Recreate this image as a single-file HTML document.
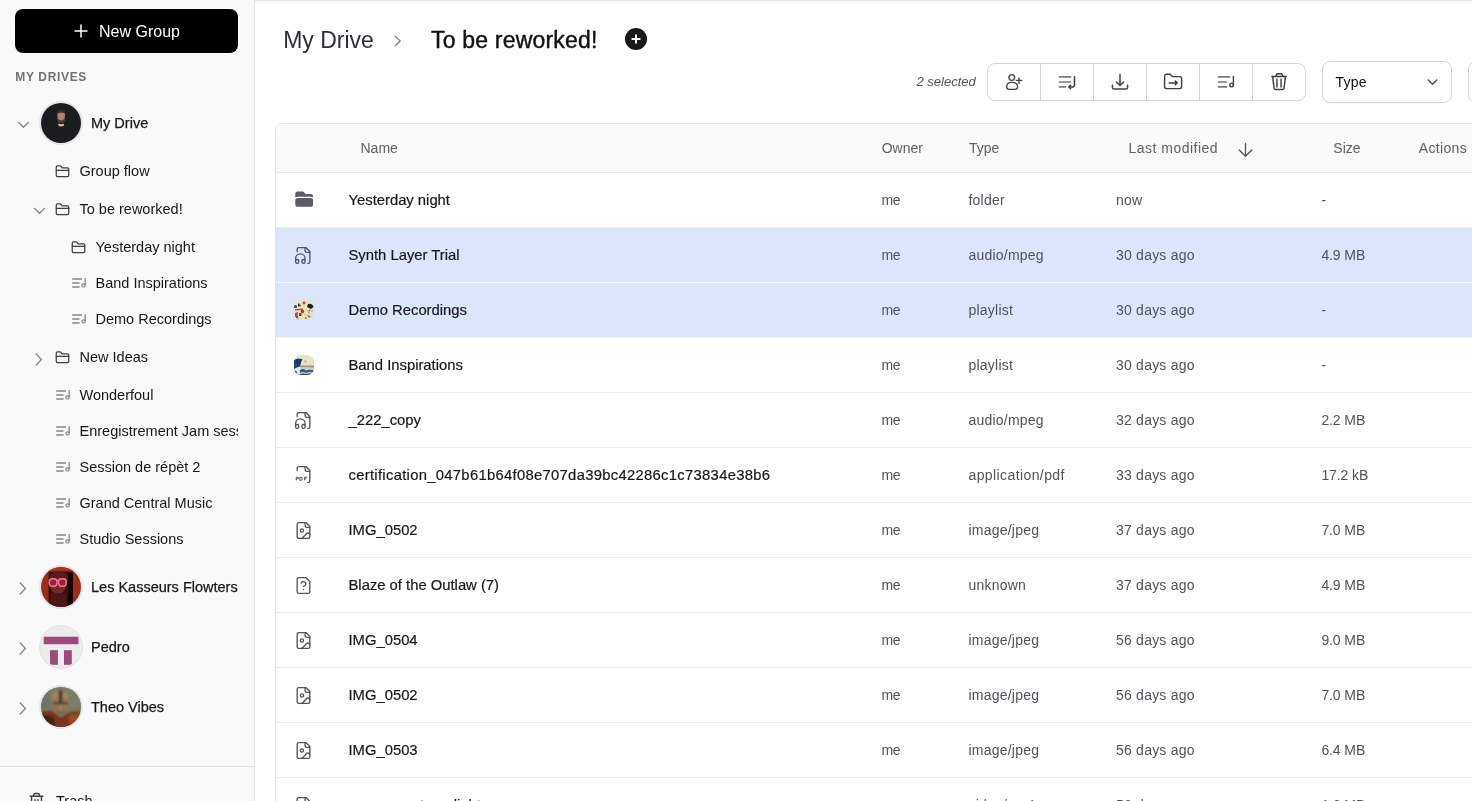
<!DOCTYPE html>
<html><head><meta charset="utf-8">
<style>
*{box-sizing:border-box;margin:0;padding:0}
html,body{width:1472px;height:801px;overflow:hidden;background:#fff;font-family:"Liberation Sans",sans-serif;color:#18181b}
.abs{position:absolute}
#side{position:absolute;left:0;top:0;width:255px;height:801px;background:#f9f9f9;border-right:1px solid #e4e4e7;overflow:hidden}
#newgroup{position:absolute;left:15px;top:9px;width:223px;height:44px;background:#000;border-radius:8px;color:#fff;font-size:16px;box-shadow:0 0 0 1px #fff}
#newgroup .lbl{position:absolute;left:84px;top:1px;line-height:44px}
.sec{position:absolute;left:15.3px;top:70px;font-size:12px;font-weight:700;letter-spacing:0.65px;color:#71717a;line-height:15px}
.item{position:absolute;height:20px;line-height:20px;font-size:14.5px;color:#18181b;white-space:nowrap}
.chev{position:absolute}
.av{position:absolute;left:41px;width:40px;height:40px;border-radius:50%;box-shadow:0 0 0 2px #e5e5e9;overflow:hidden}
.drv{position:absolute;left:91px;height:20px;line-height:20px;font-size:14.5px;color:#18181b;-webkit-text-stroke:0.25px #18181b;white-space:nowrap}
#topline{position:absolute;left:255px;top:0;width:1217px;height:1px;background:#e4e4e7}

.crumb{position:absolute;font-size:23px;line-height:30px;white-space:nowrap}
#tbl{position:absolute;left:275px;top:123px;width:1250px;height:720px;border:1px solid #e1e1e5;border-radius:7px 0 0 0;overflow:hidden}
.hdr{position:absolute;left:0;top:0;width:100%;height:49px;background:#fafafa;border-bottom:1px solid #e4e4e7}
.h{position:absolute;top:14.3px;font-size:14px;line-height:20px;color:#60606a;white-space:nowrap}
.row{position:absolute;left:0;width:100%;height:55px;border-bottom:1px solid #ececee}
.row.sel{background:#dbe6fc;border-bottom-color:#f0f4fe}
.c{position:absolute;top:17.3px;font-size:14px;line-height:20px;color:#52525b;white-space:nowrap;letter-spacing:0.22px}
.nm{position:absolute;top:17.2px;left:72.5px;font-size:14.8px;line-height:20px;color:#18181b;-webkit-text-stroke:0.2px #18181b;white-space:nowrap}
.ic{position:absolute;left:18px;top:17px}
.tb{position:absolute;left:987px;top:63px;width:319px;height:38px;border:1px solid #d4d4d8;border-radius:8px;overflow:hidden}
.tb .cell{position:absolute;top:0;height:36px;width:53px;border-right:1px solid #d4d4d8}
</style></head>
<body>
<div id="wrap" style="position:absolute;left:0;top:0;width:1472px;height:801px;overflow:hidden;will-change:transform">
<div id="side">
  <div id="newgroup">
    <svg class="abs" style="left:59px;top:15px" width="14" height="14" viewBox="0 0 14 14"><path d="M7 0.5V13.5M0.5 7H13.5" stroke="#fff" stroke-width="1.5" fill="none"/></svg>
    <span class="lbl">New Group</span>
  </div>
  <div class="sec">MY DRIVES</div>
<svg class="abs" style="left:55px;top:163.5px" width="15" height="15" viewBox="0 0 24 24" fill="none" stroke="#3f3f46" stroke-width="2" stroke-linecap="round" stroke-linejoin="round"><path d="M20 20a2 2 0 0 0 2-2V8a2 2 0 0 0-2-2h-7.9a2 2 0 0 1-1.69-.9L9.6 3.9A2 2 0 0 0 7.93 3H4a2 2 0 0 0-2 2v13a2 2 0 0 0 2 2Z"/><path d="M2 10h20"/></svg>
<div class="item" style="left:79.5px;top:161.0px">Group flow</div>
<svg class="abs" style="left:55px;top:201.5px" width="15" height="15" viewBox="0 0 24 24" fill="none" stroke="#3f3f46" stroke-width="2" stroke-linecap="round" stroke-linejoin="round"><path d="M20 20a2 2 0 0 0 2-2V8a2 2 0 0 0-2-2h-7.9a2 2 0 0 1-1.69-.9L9.6 3.9A2 2 0 0 0 7.93 3H4a2 2 0 0 0-2 2v13a2 2 0 0 0 2 2Z"/><path d="M2 10h20"/></svg>
<div class="item" style="left:79.5px;top:199.0px">To be reworked!</div>
<svg class="abs" style="left:32.5px;top:207px" width="13" height="8" viewBox="0 0 13 8" fill="none" stroke="#85858c" stroke-width="1.3" stroke-linecap="round"><path d="M1.6 1.5L6.5 6.3L11.4 1.5"/></svg>
<svg class="abs" style="left:71px;top:239.5px" width="15" height="15" viewBox="0 0 24 24" fill="none" stroke="#3f3f46" stroke-width="2" stroke-linecap="round" stroke-linejoin="round"><path d="M20 20a2 2 0 0 0 2-2V8a2 2 0 0 0-2-2h-7.9a2 2 0 0 1-1.69-.9L9.6 3.9A2 2 0 0 0 7.93 3H4a2 2 0 0 0-2 2v13a2 2 0 0 0 2 2Z"/><path d="M2 10h20"/></svg>
<div class="item" style="left:95.5px;top:237.0px">Yesterday night</div>
<svg class="abs" style="left:72px;top:278px" width="16" height="11" viewBox="0 0 16 11" fill="none" stroke="#84848c" stroke-width="1.5"><path d="M0.2 0.9H9.9M0.2 4.9H7.6M0.2 9H7.6"/><path d="M13.2 0.2V7.6" stroke-width="1.3"/><circle cx="11.5" cy="7.4" r="1.6" stroke-width="1.2"/></svg>
<div class="item" style="left:95.5px;top:273.0px">Band Inspirations</div>
<svg class="abs" style="left:72px;top:314px" width="16" height="11" viewBox="0 0 16 11" fill="none" stroke="#84848c" stroke-width="1.5"><path d="M0.2 0.9H9.9M0.2 4.9H7.6M0.2 9H7.6"/><path d="M13.2 0.2V7.6" stroke-width="1.3"/><circle cx="11.5" cy="7.4" r="1.6" stroke-width="1.2"/></svg>
<div class="item" style="left:95.5px;top:309.0px">Demo Recordings</div>
<svg class="abs" style="left:55px;top:349.5px" width="15" height="15" viewBox="0 0 24 24" fill="none" stroke="#3f3f46" stroke-width="2" stroke-linecap="round" stroke-linejoin="round"><path d="M20 20a2 2 0 0 0 2-2V8a2 2 0 0 0-2-2h-7.9a2 2 0 0 1-1.69-.9L9.6 3.9A2 2 0 0 0 7.93 3H4a2 2 0 0 0-2 2v13a2 2 0 0 0 2 2Z"/><path d="M2 10h20"/></svg>
<div class="item" style="left:79.5px;top:347.0px">New Ideas</div>
<svg class="abs" style="left:34.8px;top:352.5px" width="8" height="13" viewBox="0 0 8 13" fill="none" stroke="#85858c" stroke-width="1.3" stroke-linecap="round"><path d="M1.2 1L6.4 6.5L1.2 12"/></svg>
<svg class="abs" style="left:56px;top:390px" width="16" height="11" viewBox="0 0 16 11" fill="none" stroke="#84848c" stroke-width="1.5"><path d="M0.2 0.9H9.9M0.2 4.9H7.6M0.2 9H7.6"/><path d="M13.2 0.2V7.6" stroke-width="1.3"/><circle cx="11.5" cy="7.4" r="1.6" stroke-width="1.2"/></svg>
<div class="item" style="left:79.5px;top:385.0px">Wonderfoul</div>
<svg class="abs" style="left:56px;top:426px" width="16" height="11" viewBox="0 0 16 11" fill="none" stroke="#84848c" stroke-width="1.5"><path d="M0.2 0.9H9.9M0.2 4.9H7.6M0.2 9H7.6"/><path d="M13.2 0.2V7.6" stroke-width="1.3"/><circle cx="11.5" cy="7.4" r="1.6" stroke-width="1.2"/></svg>
<div class="item" style="left:79.5px;top:421.0px;width:158.5px;overflow:hidden">Enregistrement Jam session</div>
<svg class="abs" style="left:56px;top:462px" width="16" height="11" viewBox="0 0 16 11" fill="none" stroke="#84848c" stroke-width="1.5"><path d="M0.2 0.9H9.9M0.2 4.9H7.6M0.2 9H7.6"/><path d="M13.2 0.2V7.6" stroke-width="1.3"/><circle cx="11.5" cy="7.4" r="1.6" stroke-width="1.2"/></svg>
<div class="item" style="left:79.5px;top:457.0px">Session de répèt 2</div>
<svg class="abs" style="left:56px;top:498px" width="16" height="11" viewBox="0 0 16 11" fill="none" stroke="#84848c" stroke-width="1.5"><path d="M0.2 0.9H9.9M0.2 4.9H7.6M0.2 9H7.6"/><path d="M13.2 0.2V7.6" stroke-width="1.3"/><circle cx="11.5" cy="7.4" r="1.6" stroke-width="1.2"/></svg>
<div class="item" style="left:79.5px;top:493.0px">Grand Central Music</div>
<svg class="abs" style="left:56px;top:534px" width="16" height="11" viewBox="0 0 16 11" fill="none" stroke="#84848c" stroke-width="1.5"><path d="M0.2 0.9H9.9M0.2 4.9H7.6M0.2 9H7.6"/><path d="M13.2 0.2V7.6" stroke-width="1.3"/><circle cx="11.5" cy="7.4" r="1.6" stroke-width="1.2"/></svg>
<div class="item" style="left:79.5px;top:529.0px">Studio Sessions</div>
<div class="av" style="top:103px"><svg width="40" height="40" viewBox="0 0 40 40"><defs><filter id="bm" x="-10%" y="-10%" width="120%" height="120%"><feGaussianBlur stdDeviation="0.5"/></filter></defs><rect width="40" height="40" fill="#1b1c1f"/><g filter="url(#bm)"><path d="M16.3 11Q16.5 7.2 20.3 7.3Q24 7.3 24 11L23.8 15.5Q23.5 19.8 20.2 19.8Q16.8 19.8 16.5 15.5Z" fill="#a88472"/><path d="M16.4 14.5Q17 20 20.2 20.1Q23.4 20 23.9 14.5Q22.6 17.6 20.2 17.4Q17.8 17.6 16.4 14.5Z" fill="#4a3328"/><path d="M16.1 11Q16.3 6.8 20.3 7Q24.3 7 24.2 11L23.6 10.2Q20.3 8.6 16.8 10.2Z" fill="#3a2a24"/><path d="M17.2 20.5Q20.2 21.8 23 20.5L22.6 23Q20 23.8 17.6 23Z" fill="#c9c3a4"/><path d="M30 40Q32 36 34.5 36.5L35 40Z" fill="#7a4034"/></g></svg></div>
<div class="drv" style="left:91px;top:113.0px">My Drive</div>
<svg class="abs" style="left:16.5px;top:120.5px" width="13" height="8" viewBox="0 0 13 8" fill="none" stroke="#85858c" stroke-width="1.3" stroke-linecap="round"><path d="M1.6 1.5L6.5 6.3L11.4 1.5"/></svg>
<div class="av" style="top:567px"><svg width="40" height="40" viewBox="0 0 40 40"><defs><filter id="bl" x="-10%" y="-10%" width="120%" height="120%"><feGaussianBlur stdDeviation="0.7"/></filter><filter id="bl2" x="-30%" y="-30%" width="160%" height="160%"><feGaussianBlur stdDeviation="0.45"/></filter></defs><rect width="40" height="40" fill="#982f1d"/><g filter="url(#bl)"><rect x="7.5" y="4.5" width="24" height="36" fill="#3c0f0c"/><path d="M9 7Q14 4 22 5L27 8L27 14L9 14Z" fill="#5c1a14"/><ellipse cx="17" cy="19" rx="7.5" ry="8" fill="#7a2a22"/><path d="M10 27Q17 24 25 28L26 40L9 40Z" fill="#4e1612"/><rect x="27" y="6" width="5" height="34" fill="#150606"/><path d="M0 0H40V5Q30 2 20 3Q8 3 0 8Z" fill="#a33a22"/></g><g filter="url(#bl2)"><rect x="8.3" y="11.8" width="7.6" height="7.4" rx="3" fill="#8a2a3c" stroke="#ff70a2" stroke-width="1.4"/><rect x="17.6" y="11.8" width="7.6" height="7.4" rx="3" fill="#8a2a3c" stroke="#ff70a2" stroke-width="1.4"/><path d="M15.9 13.5H17.6" stroke="#ff70a2" stroke-width="1.2"/></g></svg></div>
<div class="drv" style="left:91px;top:577.0px">Les Kasseurs Flowters</div>
<svg class="abs" style="left:19px;top:582.0px" width="8" height="13" viewBox="0 0 8 13" fill="none" stroke="#85858c" stroke-width="1.3" stroke-linecap="round"><path d="M1.2 1L6.4 6.5L1.2 12"/></svg>
<div class="av" style="top:627px"><svg width="40" height="40" viewBox="0 0 40 40"><rect width="40" height="40" fill="#ececef"/><rect x="2.7" y="9.7" width="34.8" height="7.5" fill="#9b4a7c"/><rect x="9" y="23.2" width="7.9" height="14.6" fill="#9b4a7c"/><rect x="23" y="23.2" width="7.8" height="14.6" fill="#9b4a7c"/></svg></div>
<div class="drv" style="left:91px;top:637.0px">Pedro</div>
<svg class="abs" style="left:19px;top:642.0px" width="8" height="13" viewBox="0 0 8 13" fill="none" stroke="#85858c" stroke-width="1.3" stroke-linecap="round"><path d="M1.2 1L6.4 6.5L1.2 12"/></svg>
<div class="av" style="top:687px"><svg width="40" height="40" viewBox="0 0 40 40"><defs><filter id="bt" x="-10%" y="-10%" width="120%" height="120%"><feGaussianBlur stdDeviation="0.9"/></filter></defs><rect width="40" height="40" fill="#6f7262"/><g filter="url(#bt)"><path d="M0 0H40V22L0 22Z" fill="#7b7e6c"/><path d="M0 4L8 2L9 20L0 22Z" fill="#6c7566"/><path d="M-2 26Q8 22 14 25L20 31Q28 23 42 25V42H-2Z" fill="#7a361c"/><path d="M-2 29Q6 26 13 31L15 42H-2Z" fill="#42200f"/><path d="M27 29Q35 25 42 28V42H31Z" fill="#9a4a26"/><path d="M9.5 15Q9.5 3 19.5 3Q29.5 3 29.5 15Q29.5 27 19.5 28.5Q9.5 27 9.5 15Z" fill="#927358"/><path d="M11 9Q14 4 19.5 3.6Q25 4 28 9L27 12Q20 9 12 12Z" fill="#a4856a"/><path d="M17.6 3.4Q19.5 3 21.6 3.4L21 17L18.2 17Z" fill="#3e3228"/><path d="M12.5 17Q15.5 15.2 18.3 17M20.8 17Q23.5 15.2 26.5 17" stroke="#3a2a20" stroke-width="1.5" fill="none"/><path d="M19.5 18L18.6 22.5H20.6Z" fill="#b89876"/><path d="M15.5 25Q19.5 26.5 23.5 25" stroke="#5a3e2c" stroke-width="1" fill="none"/></g></svg></div>
<div class="drv" style="left:91px;top:697.0px">Theo Vibes</div>
<svg class="abs" style="left:19px;top:702.0px" width="8" height="13" viewBox="0 0 8 13" fill="none" stroke="#85858c" stroke-width="1.3" stroke-linecap="round"><path d="M1.2 1L6.4 6.5L1.2 12"/></svg>
<div class="abs" style="left:0;top:766px;width:254px;height:1px;background:#e4e4e7"></div>
<svg class="abs" style="left:28px;top:791.5px" width="17" height="17" viewBox="0 0 24 24" fill="none" stroke="#3f3f46" stroke-width="2" stroke-linecap="round"><path d="M3 6h18M19 6v14a2 2 0 0 1-2 2H7a2 2 0 0 1-2-2V6M8 6V4a2 2 0 0 1 2-2h4a2 2 0 0 1 2 2v2M10 11v6M14 11v6"/></svg>
<div class="item" style="left:56px;top:791.4px">Trash</div>
</div>
<div id="topline"></div><div class="abs" style="left:255px;top:1px;width:1217px;height:3px;background:linear-gradient(#f7f7f8,rgba(255,255,255,0))"></div>
<div class="crumb" style="left:283.2px;top:25.2px;color:#2e2e38">My Drive</div>
<svg class="abs" style="left:393px;top:34px" width="10" height="14" viewBox="0 0 10 14" fill="none" stroke="#7a7a80" stroke-width="1.2" stroke-linecap="round"><path d="M2.2 2.2L7.3 7L2.2 11.8"/></svg>
<div class="crumb" style="left:431px;top:25.1px;letter-spacing:0.2px;-webkit-text-stroke:0.4px #111113;color:#111113">To be reworked!</div>
<svg class="abs" style="left:625px;top:28px" width="22" height="22" viewBox="0 0 22 22"><circle cx="11" cy="11" r="11" fill="#18181b"/><path d="M11 7.2V14.8M7.2 11H14.8" stroke="#fff" stroke-width="1.9" stroke-linecap="round"/></svg>
<div class="abs" style="left:916.5px;top:72.7px;font-size:13px;line-height:18px;font-style:italic;color:#52525b;white-space:nowrap">2 selected</div>
<div class="tb">
<div class="cell" style="left:0px;"></div>
<div class="cell" style="left:53px;"></div>
<div class="cell" style="left:106px;"></div>
<div class="cell" style="left:159px;"></div>
<div class="cell" style="left:212px;"></div>
<div class="cell" style="left:265px;border-right:none;"></div>
</div>
<svg class="abs" style="left:1000px;top:68px" width="28" height="28" viewBox="0 0 28 28" fill="none" stroke-width="1.35" stroke-linecap="round" stroke-linejoin="round"><circle cx="11.8" cy="9.45" r="2.85" stroke="#3f3f46"/><path d="M6.7 19.3Q6.4 14.3 12 14.3Q17.7 14.3 17.6 19.3Q17.5 21.4 14.8 21.4H9.4Q6.8 21.4 6.7 19.3Z" stroke="#3f3f46"/><path d="M16.3 12.4H21.7M19.05 10V15.4" stroke="#3f3f46"/></svg>
<svg class="abs" style="left:1053px;top:68px" width="28" height="28" viewBox="0 0 28 28" fill="none" stroke-width="1.35" stroke-linecap="round" stroke-linejoin="round"><path d="M6.4 8.9H17.6M6.4 14H17.6M6.4 18.9H12.6" stroke="#7a7a82" stroke-width="1.6"/><path d="M21.5 8.8V16.9Q21.5 18.9 19.5 18.9H16.3" stroke="#3f3f46" stroke-width="1.5"/><path d="M17.6 17.2L15.8 18.9L17.6 20.7" stroke="#3f3f46" stroke-width="1.5"/></svg>
<svg class="abs" style="left:1106px;top:68px" width="28" height="28" viewBox="0 0 28 28" fill="none" stroke-width="1.35" stroke-linecap="round" stroke-linejoin="round"><path d="M14 6.5V17.3M10.3 14L14 17.4L17.7 14" stroke="#3f3f46" stroke-width="1.5"/><path d="M6.4 17.3V19.4Q6.4 21.1 8.1 21.1H19.9Q21.6 21.1 21.6 19.4V17.3" stroke="#3f3f46" stroke-width="1.5"/></svg>
<svg class="abs" style="left:1159px;top:68px" width="28" height="28" viewBox="0 0 28 28" fill="none" stroke-width="1.35" stroke-linecap="round" stroke-linejoin="round"><path d="M7.3 6.2H10.6Q11.4 6.2 11.9 6.9L13.3 8.6H20.8Q22.6 8.6 22.6 10.4V18.8Q22.6 20.6 20.8 20.6H7.4Q5.6 20.6 5.6 18.8V8Q5.6 6.2 7.3 6.2Z" stroke="#3f3f46" stroke-width="1.45"/><path d="M10.2 14.9H18.2M16.3 13.1L18.2 14.9L16.3 16.7" stroke="#3f3f46" stroke-width="1.45"/></svg>
<svg class="abs" style="left:1212px;top:68px" width="28" height="28" viewBox="0 0 28 28" fill="none" stroke-width="1.35" stroke-linecap="round" stroke-linejoin="round"><path d="M6.4 8.9H17.6M6.4 14H14.6M6.4 18.9H14.6" stroke="#7a7a82" stroke-width="1.6"/><path d="M21.4 8.4V16.9" stroke="#3f3f46" stroke-width="1.4"/><circle cx="19.6" cy="16.9" r="1.8" stroke="#3f3f46" stroke-width="1.4"/></svg>
<svg class="abs" style="left:1265px;top:68px" width="28" height="28" viewBox="0 0 28 28" fill="none" stroke-width="1.35" stroke-linecap="round" stroke-linejoin="round"><path d="M6.8 8.4H21.2M10.6 8.4L12.1 5.8H16.7L18 8.4" stroke="#3f3f46" stroke-width="1.45"/><path d="M7.7 8.6L9.1 20.3Q9.3 21.5 10.5 21.5H17.6Q18.8 21.5 19 20.3L20.4 8.6" stroke="#3f3f46" stroke-width="1.45"/><path d="M11.95 11.3V18.9M16.05 11.3V18.9" stroke="#3f3f46" stroke-width="1.45"/></svg>
<div class="abs" style="left:1322px;top:61px;width:130px;height:42px;border:1px solid #d4d4d8;border-radius:8px"></div>
<div class="abs" style="left:1335.5px;top:72px;font-size:14px;line-height:20px;letter-spacing:0.2px;color:#111113">Type</div>
<svg class="abs" style="left:1426px;top:78px" width="13" height="9" viewBox="0 0 13 9" fill="none" stroke="#4b5162" stroke-width="1.5" stroke-linecap="round" stroke-linejoin="round"><path d="M2.3 2L6.5 6.2L10.7 2"/></svg>
<div class="abs" style="left:1468px;top:61px;width:130px;height:42px;border:1px solid #d4d4d8;border-radius:8px"></div>
<div id="tbl">
<div class="hdr">
<div class="h" style="left:84.5px">Name</div>
<div class="h" style="left:605.7px">Owner</div>
<div class="h" style="left:692.9px">Type</div>
<div class="h" style="left:852.4px;letter-spacing:0.5px">Last modified</div>
<svg class="abs" style="left:961px;top:18px" width="17" height="16" viewBox="0 0 17 16" fill="none" stroke="#52525b" stroke-width="1.3" stroke-linecap="round" stroke-linejoin="round"><path d="M8.5 1.5V14.3M2.2 8L8.5 14.3L14.8 8"/></svg>
<div class="h" style="left:1057.3px">Size</div>
<div class="h" style="left:1142.7px;letter-spacing:0.35px">Actions</div>
</div>
<div class="row" style="top:49px"><svg class="ic" style="left:17.6px;top:16.3px" width="20.4" height="20.4" viewBox="0 0 24 24" fill="#5c5c66"><path d="M19.5 21a3 3 0 0 0 3-3v-4.5a3 3 0 0 0-3-3h-15a3 3 0 0 0-3 3V18a3 3 0 0 0 3 3h15ZM1.5 10.146V6a3 3 0 0 1 3-3h5.379a2.25 2.25 0 0 1 1.59.659l2.122 2.121c.14.141.331.22.53.22H19.5a3 3 0 0 1 3 3v1.146A4.483 4.483 0 0 0 19.5 9h-15a4.483 4.483 0 0 0-3 1.146Z"/></svg><div class="nm">Yesterday night</div><div class="c" style="left:605.5px;letter-spacing:-0.3px">me</div><div class="c" style="left:692.5px">folder</div><div class="c" style="left:840px">now</div><div class="c" style="left:1045.4px;letter-spacing:-0.1px">-</div></div>
<div class="row sel" style="top:104px"><svg class="ic" style="left:17.8px;top:17.9px" width="19" height="19" viewBox="0 0 24 24" fill="none" stroke="#52525b" stroke-width="1.7" stroke-linecap="round" stroke-linejoin="round"><path d="M17.5 22h.5a2 2 0 0 0 2-2V7l-5-5H6a2 2 0 0 0-2 2v3"/><path d="M14 2v4a2 2 0 0 0 2 2h4"/><path d="M2 19a2 2 0 1 1 4 0v1a2 2 0 1 1-4 0v-4a6 6 0 0 1 12 0v4a2 2 0 1 1-4 0v-1a2 2 0 1 1 4 0"/></svg><div class="nm">Synth Layer Trial</div><div class="c" style="left:605.5px;letter-spacing:-0.3px">me</div><div class="c" style="left:692.5px">audio/mpeg</div><div class="c" style="left:840px">30 days ago</div><div class="c" style="left:1045.4px;letter-spacing:-0.1px">4.9 MB</div></div>
<div class="row sel" style="top:159px"><svg class="ic" style="left:18px;top:17px" width="20" height="20" viewBox="0 0 20 20"><defs><clipPath id="k1"><rect width="20" height="20" rx="6.5"/></clipPath></defs><g clip-path="url(#k1)"><rect width="20" height="20" fill="#e9e3c6"/><circle cx="10" cy="3" r="1.4" fill="#d8342a"/><circle cx="1.5" cy="6.5" r="1.6" fill="#2e4f86"/><rect x="4" y="3.5" width="1.5" height="3" fill="#333"/><path d="M1 9L9 8.5L9 10L1 10.5Z" fill="#b4512a"/><circle cx="8.5" cy="11.5" r="1.8" fill="#c92b22"/><path d="M14 4Q18 3 19.5 7L17 9L13 7Z" fill="#1d1d22"/><path d="M8 4.5L11 6L10 7Z" fill="#e4d04a"/><circle cx="6" cy="5.5" r="0.9" fill="#555"/><rect x="5" y="13" width="2.5" height="3" fill="#2a5a3a"/><path d="M1 13L4 12L3.5 16L1 17Z" fill="#b24a2a"/><circle cx="3" cy="17" r="1" fill="#3a2a66"/><path d="M10 13L12 15L10.5 16Z" fill="#e3c43a"/><circle cx="15.5" cy="10.5" r="0.9" fill="#c55a36"/><circle cx="18" cy="11" r="0.7" fill="#d0436a"/><path d="M13 15L17 16L15 18Z" fill="#777"/><path d="M2 19L5 18.5L4 20Z" fill="#444"/><circle cx="12" cy="18" r="0.8" fill="#333"/><path d="M12 9L16 13L15 14Z" fill="#8a8a70" opacity="0.7"/></g></svg><div class="nm">Demo Recordings</div><div class="c" style="left:605.5px;letter-spacing:-0.3px">me</div><div class="c" style="left:692.5px">playlist</div><div class="c" style="left:840px">30 days ago</div><div class="c" style="left:1045.4px;letter-spacing:-0.1px">-</div></div>
<div class="row" style="top:214px"><svg class="ic" style="left:18px;top:17px" width="20" height="20" viewBox="0 0 20 20"><defs><clipPath id="w1"><rect width="20" height="20" rx="6.5"/></clipPath><filter id="wf" x="-10%" y="-10%" width="120%" height="120%"><feGaussianBlur stdDeviation="0.4"/></filter></defs><g clip-path="url(#w1)"><rect width="20" height="20" fill="#ebe2c4"/><g filter="url(#wf)"><rect x="0" y="10.5" width="20" height="2.2" fill="#9a978a"/><path d="M0 12.5Q6 11.5 20 13L20 20L0 20Z" fill="#c9cec6"/><path d="M2 4.2Q4 3 6 4Q7.5 3.2 8.5 4.8L7.2 6.5L6.8 9L5.5 12L3 14.5L0 15L0 5Z" fill="#1f3b6c"/><path d="M0 9Q2 7.5 3.5 9L3 12L0 13Z" fill="#2c4a7a"/><path d="M0 14Q3 12 5.5 11.5Q7 13 8 15L6 20L0 20Z" fill="#e4e8de"/><path d="M6 15Q9 13 12 15.5Q15 14 20 15.5L20 17.5Q15 16.5 12 18Q9 16 6 18Z" fill="#3a5787"/><path d="M4 20Q8 17.5 12 19Q16 17.8 20 19L20 20Z" fill="#2a4676"/><path d="M10 5.5Q11.5 4.5 13 6L12 8L10.5 7.5Z" fill="#b8bcc0"/><path d="M0 16Q2 15 3 17L2 20L0 20Z" fill="#335285"/></g></g></svg><div class="nm">Band Inspirations</div><div class="c" style="left:605.5px;letter-spacing:-0.3px">me</div><div class="c" style="left:692.5px">playlist</div><div class="c" style="left:840px">30 days ago</div><div class="c" style="left:1045.4px;letter-spacing:-0.1px">-</div></div>
<div class="row" style="top:269px"><svg class="ic" style="left:17.8px;top:17.9px" width="19" height="19" viewBox="0 0 24 24" fill="none" stroke="#52525b" stroke-width="1.7" stroke-linecap="round" stroke-linejoin="round"><path d="M17.5 22h.5a2 2 0 0 0 2-2V7l-5-5H6a2 2 0 0 0-2 2v3"/><path d="M14 2v4a2 2 0 0 0 2 2h4"/><path d="M2 19a2 2 0 1 1 4 0v1a2 2 0 1 1-4 0v-4a6 6 0 0 1 12 0v4a2 2 0 1 1-4 0v-1a2 2 0 1 1 4 0"/></svg><div class="nm">_222_copy</div><div class="c" style="left:605.5px;letter-spacing:-0.3px">me</div><div class="c" style="left:692.5px">audio/mpeg</div><div class="c" style="left:840px">32 days ago</div><div class="c" style="left:1045.4px;letter-spacing:-0.1px">2.2 MB</div></div>
<div class="row" style="top:324px"><svg class="ic" style="left:18.4px;top:16.9px" width="19" height="19" viewBox="0 0 24 24" fill="none" stroke="#52525b" stroke-width="1.7" stroke-linecap="round" stroke-linejoin="round"><path d="M17.5 22h.5a2 2 0 0 0 2-2V7l-5-5H6a2 2 0 0 0-2 2v3"/><path d="M14 2v4a2 2 0 0 0 2 2h4"/><g stroke-width="1.25" stroke-linecap="butt" stroke-linejoin="miter"><path d="M2.8 19.4V15.5H5A1 1 0 0 1 5 17.5H2.8"/><path d="M7.4 15.5V19.4H8.6A1.95 1.95 0 0 0 8.6 15.5Z"/><path d="M16.6 15.5H13.2V19.4M13.2 17.4H15.8"/></g></svg><div class="nm" style="letter-spacing:0.3px">certification_047b61b64f08e707da39bc42286c1c73834e38b6</div><div class="c" style="left:605.5px;letter-spacing:-0.3px">me</div><div class="c" style="left:692.5px;letter-spacing:0.4px">application/pdf</div><div class="c" style="left:840px">33 days ago</div><div class="c" style="left:1045.4px;letter-spacing:-0.1px">17.2 kB</div></div>
<div class="row" style="top:379px"><svg class="ic" style="left:17.8px;top:17.9px" width="19" height="19" viewBox="0 0 24 24" fill="none" stroke="#52525b" stroke-width="1.7" stroke-linecap="round" stroke-linejoin="round"><path d="M15 2H6a2 2 0 0 0-2 2v16a2 2 0 0 0 2 2h12a2 2 0 0 0 2-2V7Z"/><path d="M14 2v4a2 2 0 0 0 2 2h4"/><circle cx="10" cy="12" r="2"/><path d="m20 17-1.086-1.086a2 2 0 0 0-2.828 0L10 22"/></svg><div class="nm">IMG_0502</div><div class="c" style="left:605.5px;letter-spacing:-0.3px">me</div><div class="c" style="left:692.5px">image/jpeg</div><div class="c" style="left:840px">37 days ago</div><div class="c" style="left:1045.4px;letter-spacing:-0.1px">7.0 MB</div></div>
<div class="row" style="top:434px"><svg class="ic" style="left:17.8px;top:17.9px" width="19" height="19" viewBox="0 0 24 24" fill="none" stroke="#52525b" stroke-width="1.7" stroke-linecap="round" stroke-linejoin="round"><path d="M12 17h.01"/><path d="M15 2H6a2 2 0 0 0-2 2v16a2 2 0 0 0 2 2h12a2 2 0 0 0 2-2V7z"/><path d="M9.1 9a3 3 0 0 1 5.82 1c0 2-3 3-3 3"/></svg><div class="nm">Blaze of the Outlaw (7)</div><div class="c" style="left:605.5px;letter-spacing:-0.3px">me</div><div class="c" style="left:692.5px">unknown</div><div class="c" style="left:840px">37 days ago</div><div class="c" style="left:1045.4px;letter-spacing:-0.1px">4.9 MB</div></div>
<div class="row" style="top:489px"><svg class="ic" style="left:17.8px;top:17.9px" width="19" height="19" viewBox="0 0 24 24" fill="none" stroke="#52525b" stroke-width="1.7" stroke-linecap="round" stroke-linejoin="round"><path d="M15 2H6a2 2 0 0 0-2 2v16a2 2 0 0 0 2 2h12a2 2 0 0 0 2-2V7Z"/><path d="M14 2v4a2 2 0 0 0 2 2h4"/><circle cx="10" cy="12" r="2"/><path d="m20 17-1.086-1.086a2 2 0 0 0-2.828 0L10 22"/></svg><div class="nm">IMG_0504</div><div class="c" style="left:605.5px;letter-spacing:-0.3px">me</div><div class="c" style="left:692.5px">image/jpeg</div><div class="c" style="left:840px">56 days ago</div><div class="c" style="left:1045.4px;letter-spacing:-0.1px">9.0 MB</div></div>
<div class="row" style="top:544px"><svg class="ic" style="left:17.8px;top:17.9px" width="19" height="19" viewBox="0 0 24 24" fill="none" stroke="#52525b" stroke-width="1.7" stroke-linecap="round" stroke-linejoin="round"><path d="M15 2H6a2 2 0 0 0-2 2v16a2 2 0 0 0 2 2h12a2 2 0 0 0 2-2V7Z"/><path d="M14 2v4a2 2 0 0 0 2 2h4"/><circle cx="10" cy="12" r="2"/><path d="m20 17-1.086-1.086a2 2 0 0 0-2.828 0L10 22"/></svg><div class="nm">IMG_0502</div><div class="c" style="left:605.5px;letter-spacing:-0.3px">me</div><div class="c" style="left:692.5px">image/jpeg</div><div class="c" style="left:840px">56 days ago</div><div class="c" style="left:1045.4px;letter-spacing:-0.1px">7.0 MB</div></div>
<div class="row" style="top:599px"><svg class="ic" style="left:17.8px;top:17.9px" width="19" height="19" viewBox="0 0 24 24" fill="none" stroke="#52525b" stroke-width="1.7" stroke-linecap="round" stroke-linejoin="round"><path d="M15 2H6a2 2 0 0 0-2 2v16a2 2 0 0 0 2 2h12a2 2 0 0 0 2-2V7Z"/><path d="M14 2v4a2 2 0 0 0 2 2h4"/><circle cx="10" cy="12" r="2"/><path d="m20 17-1.086-1.086a2 2 0 0 0-2.828 0L10 22"/></svg><div class="nm">IMG_0503</div><div class="c" style="left:605.5px;letter-spacing:-0.3px">me</div><div class="c" style="left:692.5px">image/jpeg</div><div class="c" style="left:840px">56 days ago</div><div class="c" style="left:1045.4px;letter-spacing:-0.1px">6.4 MB</div></div>
<div class="row" style="top:654px"><svg class="ic" style="left:17.8px;top:17.9px" width="19" height="19" viewBox="0 0 24 24" fill="none" stroke="#52525b" stroke-width="1.7" stroke-linecap="round" stroke-linejoin="round"><path d="M15 2H6a2 2 0 0 0-2 2v16a2 2 0 0 0 2 2h12a2 2 0 0 0 2-2V7Z"/><path d="M14 2v4a2 2 0 0 0 2 2h4"/><circle cx="10" cy="12" r="2"/><path d="m20 17-1.086-1.086a2 2 0 0 0-2.828 0L10 22"/></svg><div class="nm">ramoneur_turn_light</div><div class="c" style="left:605.5px;letter-spacing:-0.3px">me</div><div class="c" style="left:692.5px">video/mp4</div><div class="c" style="left:840px">56 days ago</div><div class="c" style="left:1045.4px;letter-spacing:-0.1px">1.6 MB</div></div>
</div>
</div>
</body></html>
